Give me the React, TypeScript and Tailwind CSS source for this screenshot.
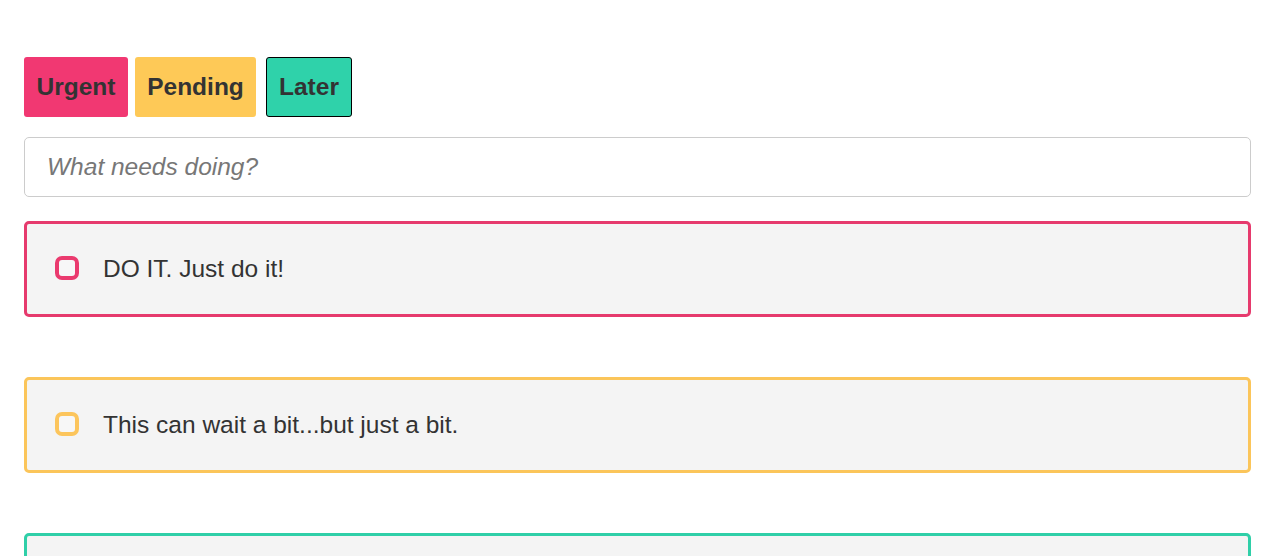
import { useState } from 'react';

type Priority = 'urgent' | 'pending' | 'later';

const TODOS: { id: number; text: string; priority: Priority }[] = [
  { id: 1, text: 'DO IT. Just do it!', priority: 'urgent' },
  { id: 2, text: 'This can wait a bit...but just a bit.', priority: 'pending' },
  { id: 3, text: 'Whenever you get around to it.', priority: 'later' },
];

const cardBorder: Record<Priority, string> = {
  urgent: 'border-[#e63a6d]',
  pending: 'border-[#fbc55a]',
  later: 'border-[#2fcfa8]',
};

const boxBorder: Record<Priority, string> = {
  urgent: 'border-[#ea3a6e]',
  pending: 'border-[#fcc55c]',
  later: 'border-[#2fd0aa]',
};

export default function App() {
  const [selected, setSelected] = useState<Priority>('later');

  return (
    <div className="min-h-screen bg-white pl-6 pr-[26px] pt-[57px] font-['Liberation_Sans',Arial,sans-serif] text-[#333]">
      {/* Priority picker */}
      <div className="flex items-start">
        <button
          onClick={() => setSelected('urgent')}
          className={`h-[60px] w-[104px] rounded-[3px] bg-[#f13872] text-[24.5px] font-bold text-[#333] ${
            selected === 'urgent' ? 'border border-black' : ''
          }`}
        >
          Urgent
        </button>
        <button
          onClick={() => setSelected('pending')}
          className={`ml-[7px] h-[60px] w-[121px] rounded-[3px] bg-[#fec957] text-[24.5px] font-bold text-[#333] ${
            selected === 'pending' ? 'border border-black' : ''
          }`}
        >
          Pending
        </button>
        <button
          onClick={() => setSelected('later')}
          className={`ml-[10px] h-[60px] w-[86px] rounded-[3px] bg-[#2fd2aa] text-[24.5px] font-bold text-[#333] ${
            selected === 'later' ? 'border border-black' : ''
          }`}
        >
          Later
        </button>
      </div>

      {/* New todo */}
      <input
        type="text"
        placeholder="What needs doing?"
        className="mt-5 block h-[60px] w-full rounded-[5px] border border-[#ccc] bg-white px-[22px] text-[24.5px] text-[#333] outline-none placeholder:italic placeholder:text-[#777]"
      />

      {/* List */}
      <ul className="mt-6 flex flex-col gap-[60px]">
        {TODOS.map((t) => (
          <li
            key={t.id}
            className={`flex h-[96px] items-center rounded-[5px] border-[3px] border-solid bg-[#f4f4f4] pl-[28px] ${cardBorder[t.priority]}`}
          >
            <span
              className={`mb-[3px] block h-[24px] w-[24px] shrink-0 rounded-[7px] border-[4px] border-solid bg-[#f7f7f7] ${boxBorder[t.priority]}`}
            />
            <span className="ml-[24px] text-[24.5px] text-[#333]">{t.text}</span>
          </li>
        ))}
      </ul>
    </div>
  );
}
